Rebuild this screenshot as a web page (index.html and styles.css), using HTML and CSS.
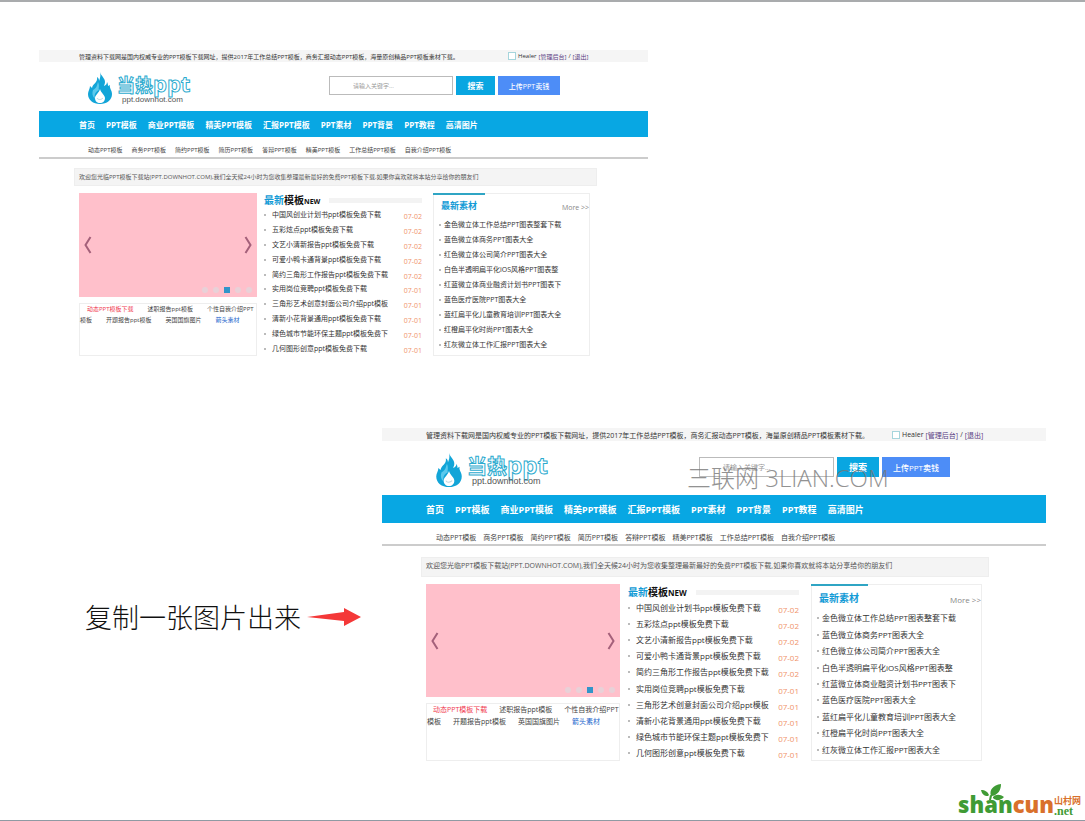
FILE: index.html
```html
<!DOCTYPE html>
<html lang="zh-CN">
<head>
<meta charset="utf-8">
<title>复制一张图片出来</title>
<link rel="stylesheet" href="styles.css">
</head>
<body class="page">
<svg class="defs" aria-hidden="true">
  <symbol id="flame" viewBox="0 0 24 32">
    <path fill="#12a5d8" d="M12 0c1 4 5 6 5 10 0 2-1 3-1 4 2-1 3-2 3-4 1 2 1 3 1 4l2-1c-1 3 2 5 2 9 0 6-5 10-12 10S0 28 0 22c0-3 2-5 2-8l2 2c1-5 6-5 5-11 2 1 2 3 2 4 1-3 2-5 1-9z"/>
    <path fill="#5cc9ec" d="M5 18c4-2 4-5 5-8 2 4 0 7 1 8-4 2-5 5-4 9-3-3-3-6-2-9z"/>
    <path fill="#fff" d="M12 17c1 4 5 6 5 9 0 3-2 5-5 5s-5-2-5-5c0-3 4-5 5-9z"/>
    <path fill="none" stroke="#b9d5df" d="M9 26c1 2 4 2 6 0"/>
  </symbol>
</svg>

<main class="board">
  <section class="row row-first">
    <article class="shot">
      <div class="topbar">
        <span>管理资料下载网是国内权威专业的PPT模板下载网址，提供2017年工作总结PPT模板，商务汇报动态PPT模板，海量原创精品PPT模板素材下载。</span>
        <span class="user"><input type="checkbox" class="tick" aria-label="Healer"> Healer <a href="#">[管理后台]</a> /<a href="#">[退出]</a></span>
      </div>
      <header class="head">
        <a href="#" class="logo"><svg class="flame"><use href="#flame"/></svg><span class="brand"><b class="name">当热<i>ppt</i></b><span class="domain">ppt.downhot.com</span></span></a>
        <form class="search">
          <input type="text" class="field" placeholder="请输入关键字..." aria-label="关键字">
          <button type="button" class="btn find">搜索</button>
          <button type="button" class="btn upload">上传PPT卖钱</button>
        </form>
      </header>
      <nav class="nav"><a href="#">首页</a><a href="#">PPT模板</a><a href="#">商业PPT模板</a><a href="#">精美PPT模板</a><a href="#">汇报PPT模板</a><a href="#">PPT素材</a><a href="#">PPT背景</a><a href="#">PPT教程</a><a href="#">高清图片</a></nav>
      <nav class="subnav"><a href="#">动态PPT模板</a><a href="#">商务PPT模板</a><a href="#">简约PPT模板</a><a href="#">简历PPT模板</a><a href="#">答辩PPT模板</a><a href="#">精美PPT模板</a><a href="#">工作总结PPT模板</a><a href="#">自我介绍PPT模板</a></nav>
      <p class="notice">欢迎您光临PPT模板下载站(PPT.DOWNHOT.COM),我们全天候24小时为您收集整理最新最好的免费PPT模板下载,如果你喜欢就将本站分享给你的朋友们</p>
      <div class="content">
        <div class="left">
          <div class="slider">
            <button type="button" class="arrow" aria-label="上一张"><svg viewBox="0 0 8 18"><path d="M7 1 2 9l5 8"/></svg></button>
            <button type="button" class="arrow" aria-label="下一张"><svg viewBox="0 0 8 18"><path d="M1 1l5 8-5 8"/></svg></button>
            <div class="dots"><i></i><i></i><i class="on"></i><i></i><i></i></div>
          </div>
          <div class="tags"><a href="#" class="red">动态PPT模板下载</a><a href="#">述职报告ppt模板</a><a href="#">个性自我介绍PPT模板</a><a href="#">开题报告ppt模板</a><a href="#">英国国旗图片</a><a href="#" class="blue">箭头素材</a></div>
        </div>
        <div class="middle">
          <h2 class="title"><span><em>最新</em>模板<small>NEW</small></span></h2>
          <ul class="news">
            <li><a href="#">中国风创业计划书ppt模板免费下载</a><time>07-02</time></li>
            <li><a href="#">五彩炫点ppt模板免费下载</a><time>07-02</time></li>
            <li><a href="#">文艺小清新报告ppt模板免费下载</a><time>07-02</time></li>
            <li><a href="#">可爱小鸭卡通背景ppt模板免费下载</a><time>07-02</time></li>
            <li><a href="#">简约三角形工作报告ppt模板免费下载</a><time>07-02</time></li>
            <li><a href="#">实用岗位竞聘ppt模板免费下载</a><time>07-01</time></li>
            <li><a href="#">三角形艺术创意封面公司介绍ppt模板</a><time>07-01</time></li>
            <li><a href="#">清新小花背景通用ppt模板免费下载</a><time>07-01</time></li>
            <li><a href="#">绿色城市节能环保主题ppt模板免费下</a><time>07-01</time></li>
            <li><a href="#">几何图形创意ppt模板免费下载</a><time>07-01</time></li>
          </ul>
        </div>
        <div class="right">
          <div class="right-head"><h2>最新素材</h2><a href="#">More &gt;&gt;</a></div>
          <ul class="assets">
            <li><a href="#">金色微立体工作总结PPT图表整套下载</a></li>
            <li><a href="#">蓝色微立体商务PPT图表大全</a></li>
            <li><a href="#">红色微立体公司简介PPT图表大全</a></li>
            <li><a href="#">白色半透明扁平化iOS风格PPT图表整</a></li>
            <li><a href="#">红蓝微立体商业融资计划书PPT图表下</a></li>
            <li><a href="#">蓝色医疗医院PPT图表大全</a></li>
            <li><a href="#">蓝红扁平化儿童教育培训PPT图表大全</a></li>
            <li><a href="#">红橙扁平化时尚PPT图表大全</a></li>
            <li><a href="#">红灰微立体工作汇报PPT图表大全</a></li>
          </ul>
        </div>
      </div>
    </article>
  </section>

  <section class="row row-second">
    <div class="caption">
      <span>复制一张图片出来</span>
      <svg class="pointer" viewBox="0 0 54 18"><path fill="#f43838" d="M0 9 37 4V0l17 9-17 9v-5z"/></svg>
    </div>
    <article class="shot large">
      <div class="topbar">
        <span>管理资料下载网是国内权威专业的PPT模板下载网址，提供2017年工作总结PPT模板，商务汇报动态PPT模板，海量原创精品PPT模板素材下载。</span>
        <span class="user"><input type="checkbox" class="tick" aria-label="Healer"> Healer <a href="#">[管理后台]</a> /<a href="#">[退出]</a></span>
      </div>
      <header class="head">
        <a href="#" class="logo"><svg class="flame"><use href="#flame"/></svg><span class="brand"><b class="name">当热<i>ppt</i></b><span class="domain">ppt.downhot.com</span></span></a>
        <form class="search">
          <input type="text" class="field" placeholder="请输入关键字..." aria-label="关键字">
          <button type="button" class="btn find">搜索</button>
          <button type="button" class="btn upload">上传PPT卖钱</button>
        </form>
        <span class="watermark">三联网 3LIAN.COM</span>
      </header>
      <nav class="nav"><a href="#">首页</a><a href="#">PPT模板</a><a href="#">商业PPT模板</a><a href="#">精美PPT模板</a><a href="#">汇报PPT模板</a><a href="#">PPT素材</a><a href="#">PPT背景</a><a href="#">PPT教程</a><a href="#">高清图片</a></nav>
      <nav class="subnav"><a href="#">动态PPT模板</a><a href="#">商务PPT模板</a><a href="#">简约PPT模板</a><a href="#">简历PPT模板</a><a href="#">答辩PPT模板</a><a href="#">精美PPT模板</a><a href="#">工作总结PPT模板</a><a href="#">自我介绍PPT模板</a></nav>
      <p class="notice">欢迎您光临PPT模板下载站(PPT.DOWNHOT.COM),我们全天候24小时为您收集整理最新最好的免费PPT模板下载,如果你喜欢就将本站分享给你的朋友们</p>
      <div class="content">
        <div class="left">
          <div class="slider">
            <button type="button" class="arrow" aria-label="上一张"><svg viewBox="0 0 8 18"><path d="M7 1 2 9l5 8"/></svg></button>
            <button type="button" class="arrow" aria-label="下一张"><svg viewBox="0 0 8 18"><path d="M1 1l5 8-5 8"/></svg></button>
            <div class="dots"><i></i><i></i><i class="on"></i><i></i><i></i></div>
          </div>
          <div class="tags"><a href="#" class="red">动态PPT模板下载</a><a href="#">述职报告ppt模板</a><a href="#">个性自我介绍PPT模板</a><a href="#">开题报告ppt模板</a><a href="#">英国国旗图片</a><a href="#" class="blue">箭头素材</a></div>
        </div>
        <div class="middle">
          <h2 class="title"><span><em>最新</em>模板<small>NEW</small></span></h2>
          <ul class="news">
            <li><a href="#">中国风创业计划书ppt模板免费下载</a><time>07-02</time></li>
            <li><a href="#">五彩炫点ppt模板免费下载</a><time>07-02</time></li>
            <li><a href="#">文艺小清新报告ppt模板免费下载</a><time>07-02</time></li>
            <li><a href="#">可爱小鸭卡通背景ppt模板免费下载</a><time>07-02</time></li>
            <li><a href="#">简约三角形工作报告ppt模板免费下载</a><time>07-02</time></li>
            <li><a href="#">实用岗位竞聘ppt模板免费下载</a><time>07-01</time></li>
            <li><a href="#">三角形艺术创意封面公司介绍ppt模板</a><time>07-01</time></li>
            <li><a href="#">清新小花背景通用ppt模板免费下载</a><time>07-01</time></li>
            <li><a href="#">绿色城市节能环保主题ppt模板免费下</a><time>07-01</time></li>
            <li><a href="#">几何图形创意ppt模板免费下载</a><time>07-01</time></li>
          </ul>
        </div>
        <div class="right">
          <div class="right-head"><h2>最新素材</h2><a href="#">More &gt;&gt;</a></div>
          <ul class="assets">
            <li><a href="#">金色微立体工作总结PPT图表整套下载</a></li>
            <li><a href="#">蓝色微立体商务PPT图表大全</a></li>
            <li><a href="#">红色微立体公司简介PPT图表大全</a></li>
            <li><a href="#">白色半透明扁平化iOS风格PPT图表整</a></li>
            <li><a href="#">红蓝微立体商业融资计划书PPT图表下</a></li>
            <li><a href="#">蓝色医疗医院PPT图表大全</a></li>
            <li><a href="#">蓝红扁平化儿童教育培训PPT图表大全</a></li>
            <li><a href="#">红橙扁平化时尚PPT图表大全</a></li>
            <li><a href="#">红灰微立体工作汇报PPT图表大全</a></li>
          </ul>
        </div>
      </div>
    </article>
  </section>
</main>

<footer class="site-mark">
  <span class="word"><b class="green">shan</b><b class="orange">cun</b>
    <svg class="leaf" viewBox="0 0 24 20"><path fill="#3f9b35" d="M10 12C8 6 12 1 20 0c0 6-3 11-9 12zM12 13c3-3 7-3 11 0-4 4-8 4-11 1zM7 12C3 12 1 10 0 6c4 0 7 2 8 5zM9 11l2 1-1 4H8z"/></svg>
  </span>
  <span class="tail"><b class="cn">山村网</b><b class="net">.net</b></span>
</footer>
</body>
</html>
```
FILE: styles.css
```css
* { box-sizing: border-box; }

.page {
  margin: 0;
  min-height: 100vh;
  display: flex;
  flex-direction: column;
  border-top: 2px solid #a9abad;
  border-bottom: 1px solid #8f9aa3;
  background: #fff;
  color: #444;
  font-family: "Open Sans", "Noto Sans CJK SC", sans-serif;
}

.page a { color: inherit; text-decoration: none; }
.page h2, .page p, .page ul { margin: 0; padding: 0; }
.page ul { list-style: none; }
.defs { position: absolute; width: 0; height: 0; }

.row-first { padding: 48px 437px 0 39px; }
.row-second {
  display: grid;
  grid-template-columns: 343px 1fr;
  padding: 72px 39px 0;
}

.caption {
  display: flex;
  align-items: center;
  gap: 6px;
  margin-left: 46px;
  padding-top: 44px;
  color: #111;
  font: 300 27px/36px "Noto Sans CJK SC", sans-serif;
  white-space: nowrap;
}
.pointer { width: 54px; height: 18px; }

/* One snapshot of the site; .large is the enlarged copy */
.shot {
  --text: 6px;
  --item: 7px;
  --nav: 8px;
  --indent: 40px;
  --bar-h: 12px;
  --head-h: 49px;
  --nav-h: 26px;
  --sub-h: 22px;
  --sub-gap: 9px;
  --notice-h: 18px;
  --notice-top: 9px;
  --cols: 178px 162px 157px;
  --col-gap: 7px;
  --slide-h: 104px;
  --tags-h: 53px;
  --tag-pad: 7px;
  --line: 11px;
  --body-w: 511px;
  --field-w: 124px;
  --find-w: 39px;
  --upload-w: 62px;
  --control-h: 19px;
  --brand: 18px;
  --brand-latin: 22px;
  --domain: 8px;
  --flame-w: 24px;
  --flame-h: 32px;
  --h2: 9px;
  --title: 10px;
  --title-h: 15px;
  --right-h: 23px;
  --tab-w: 52px;
  font-size: var(--text);
  white-space: nowrap;
  min-width: 0;
}
.large {
  --text: 7px;
  --item: 8px;
  --nav: 9px;
  --indent: 44px;
  --bar-h: 13px;
  --head-h: 54px;
  --nav-h: 28px;
  --sub-h: 23px;
  --sub-gap: 7px;
  --notice-h: 20px;
  --notice-top: 11px;
  --cols: 194px 175px 171px;
  --col-gap: 8px;
  --slide-h: 113px;
  --tags-h: 58px;
  --tag-pad: 6px;
  --line: 12px;
  --body-w: 556px;
  --field-w: 135px;
  --find-w: 42px;
  --upload-w: 68px;
  --control-h: 20px;
  --brand: 20px;
  --brand-latin: 24px;
  --domain: 9px;
  --flame-w: 26px;
  --flame-h: 34px;
  --h2: 10px;
  --title: 10px;
  --title-h: 16px;
  --right-h: 25px;
  --tab-w: 57px;
}

.topbar {
  height: var(--bar-h);
  padding-left: var(--indent);
  background: #f5f5f5;
  color: #333;
  display: flex;
  align-items: center;
}
.topbar > span:first-child { width: calc(var(--body-w) - 82px); }
.large .topbar > span:first-child { width: 466px; }
.user { display: flex; align-items: center; gap: 2px; }
.user a { color: #5a3d83; }
.user .tick {
  appearance: none;
  width: 8px;
  height: 8px;
  margin: 0;
  border: 1px solid #a6d5dc;
  background: #fff;
}

.head {
  position: relative;
  height: var(--head-h);
  width: calc(var(--body-w) + var(--indent));
  padding: 0 30px 0 49px;
  display: flex;
  align-items: center;
  justify-content: space-between;
}
.large .head { padding: 0 32px 0 54px; }
.logo { display: flex; align-items: center; gap: 5px; margin-top: 3px; }
.flame { width: var(--flame-w); height: var(--flame-h); }
.brand { display: flex; flex-direction: column; }
.name {
  font: 700 var(--brand)/22px "Noto Sans CJK SC", sans-serif;
  color: #fff;
  -webkit-text-stroke: 1px #2cabcf;
}
.name i { font: 700 var(--brand-latin)/22px "Open Sans", sans-serif; }
.domain {
  padding-left: 5px;
  font: var(--domain)/9px "Liberation Sans", sans-serif;
  color: #555;
}
.search { display: flex; gap: 3px; margin-bottom: 2px; }
.field {
  width: var(--field-w);
  height: var(--control-h);
  border: 1px solid #bbb;
  padding: 0 0 0 23px;
  font: inherit;
  background: #fff;
}
.field::placeholder { color: #999; opacity: 1; }
.btn {
  height: var(--control-h);
  border: 0;
  padding: 0;
  color: #fff;
  font-family: inherit;
}
.find { width: var(--find-w); background: #09a6e1; font-size: var(--nav); font-weight: 700; }
.upload { width: var(--upload-w); background: #4d8df7; font-size: var(--item); font-weight: 500; }
.watermark {
  position: absolute;
  left: 305px;
  top: 22px;
  color: #777;
  opacity: 0.8;
  font: 300 24px/30px "Open Sans", "Noto Sans CJK SC", sans-serif;
}

.nav {
  height: var(--nav-h);
  padding-left: var(--indent);
  background: #08a7e3;
  color: #fff;
  font-size: var(--nav);
  font-weight: 700;
  display: flex;
  align-items: center;
  gap: 11px;
}
.subnav {
  height: var(--sub-h);
  padding: 5px 0 0 49px;
  border-bottom: 2px solid #ccc;
  display: flex;
  align-items: center;
  gap: var(--sub-gap);
}
.large .subnav { padding: 6px 0 0 54px; }
.page .notice {
  height: var(--notice-h);
  width: calc(var(--body-w) + 12px);
  margin: var(--notice-top) 0 7px calc(var(--indent) - 5px);
  padding-left: 4px;
  background: #f4f4f4;
  border: 1px solid #eee;
  line-height: 16px;
  color: #555;
}

.content {
  display: grid;
  grid-template-columns: var(--cols);
  gap: var(--col-gap);
  margin-left: var(--indent);
}
.left { display: grid; gap: 6px; align-content: start; }
.slider {
  position: relative;
  height: var(--slide-h);
  padding: 0 4px;
  background: #ffc0cb;
  display: flex;
  align-items: center;
  justify-content: space-between;
}
.arrow { width: 9px; height: 18px; padding: 0; border: 0; background: none; }
.arrow svg { display: block; width: 9px; height: 18px; fill: none; stroke: #a4607a; stroke-width: 2; }
.dots { position: absolute; right: 5px; bottom: 4px; display: flex; gap: 5px; }
.dots i { width: 6px; height: 6px; border-radius: 3px; background: #e8d1d8; }
.dots .on { border-radius: 0; background: #3195c9; }
.tags {
  height: var(--tags-h);
  border: 1px solid #eee;
  line-height: var(--line);
  white-space: normal;
}
.tags a { padding: 0 var(--tag-pad); }
.tags .red { color: #f03a50; }
.tags .blue { color: #2467cd; }

.middle, .right { display: flex; flex-direction: column; }
.middle { padding-right: 4px; }
.title {
  height: var(--title-h);
  display: flex;
  align-items: center;
  gap: 9px;
  font-size: var(--title);
  line-height: var(--title-h);
  color: #111;
}
.title::after { content: ""; flex: 1; height: 5px; background: #f3f3f3; }
.title em { color: #139bd6; font-style: normal; }
.title small { font-size: var(--item); }
.news, .assets { flex: 1; display: grid; grid-auto-rows: 1fr; font-size: var(--item); color: #333; }
.news li { display: flex; align-items: center; line-height: 10px; }
.news li::before, .assets li::before {
  content: "";
  width: 2px;
  height: 2px;
  margin-right: 6px;
  background: #bbb;
}
.news time { margin-left: auto; padding-top: 4px; color: #f0936b; }

.right { position: relative; border: 1px solid #eee; padding-bottom: 2px; }
.right::before {
  content: "";
  position: absolute;
  left: -1px;
  top: -1px;
  width: var(--tab-w);
  height: 2px;
  background: #2fa5c4;
}
.right-head {
  height: var(--right-h);
  padding-left: 7px;
  display: flex;
  align-items: center;
  justify-content: space-between;
}
.right-head h2 { font-size: var(--h2); color: #139bd6; }
.right-head a { padding-top: 3px; color: #888; font-size: var(--item); }
.assets li { display: flex; align-items: center; line-height: 10px; padding-left: 5px; }
.assets li::before { margin-right: 3px; }

.site-mark {
  margin-top: auto;
  padding: 0 4px 2px 0;
  display: flex;
  justify-content: flex-end;
  align-items: flex-end;
}
.word {
  position: relative;
  font: 700 22px/28px "Open Sans", sans-serif;
}
.green { color: #3f9b35; }
.orange { color: #d9702b; }
.leaf { position: absolute; left: 23px; top: -6px; width: 24px; height: 20px; }
.tail { display: flex; flex-direction: column; padding-bottom: 2px; }
.cn { font-size: 9px; line-height: 10px; color: #d9702b; }
.net { font: 700 12px/10px "Liberation Serif", serif; color: #3f9b35; }
```
